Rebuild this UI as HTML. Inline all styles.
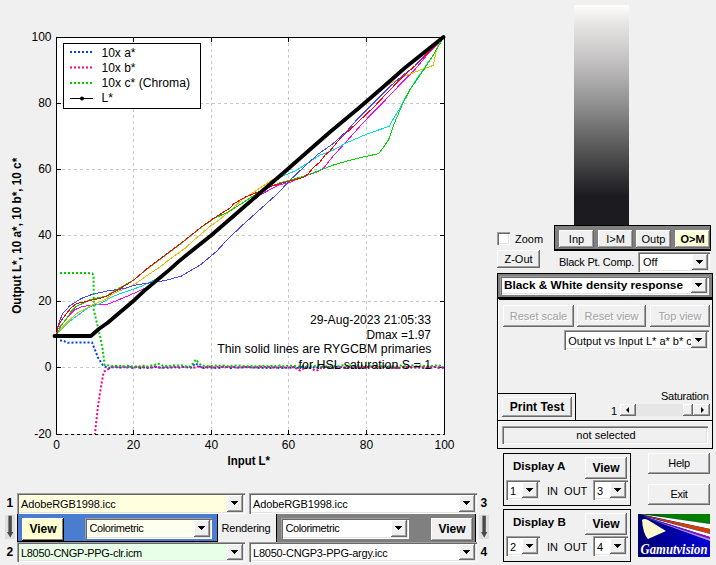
<!DOCTYPE html>
<html><head><meta charset="utf-8"><style>
*{box-sizing:border-box}
body{margin:0;width:716px;height:565px;background:#f0f0f0;position:relative;overflow:hidden;font-family:"Liberation Sans",sans-serif;font-size:11px;color:#000}
.a{position:absolute}
.btn{position:absolute;background:#f0f0f0;box-shadow:inset -1px -1px #696969,inset 1px 1px #fff,inset -2px -2px #a0a0a0;text-align:center;white-space:nowrap}
.cb{position:absolute;background:#fff;box-shadow:inset 1px 1px #a0a0a0,inset 2px 2px #696969,inset -1px -1px #fff,inset -2px -2px #e3e3e3;white-space:nowrap;overflow:hidden}
.dd{position:absolute;top:2px;right:2px;bottom:2px;width:16px;background:#f0f0f0;box-shadow:inset -1px -1px #696969,inset 1px 1px #fff,inset -2px -2px #a0a0a0}
.dd:after{content:"";position:absolute;left:4px;top:6px;border-left:4px solid transparent;border-right:4px solid transparent;border-top:4px solid #000}
.txt{position:absolute;white-space:nowrap;line-height:12px}
</style></head><body>
<svg width="716" height="480" style="position:absolute;left:0;top:0">
<rect x="56" y="37" width="389" height="398" fill="#fff"/>
<path d="M133.5,37 V434 M211.5,37 V434 M288.5,37 V434 M366.5,37 V434 M56,103.5 H444 M56,169.5 H444 M56,235.5 H444 M56,301.5 H444 M56,367.5 H444" stroke="#c8c8c8" stroke-width="1" stroke-dasharray="3 3" fill="none" shape-rendering="crispEdges"/>
<path d="M56.5,434 V37.5 H444.5 V434" stroke="#000" stroke-width="1" fill="none" shape-rendering="crispEdges"/>
<path d="M56,434.5 H445" stroke="#d8d8d8" stroke-width="1" fill="none" shape-rendering="crispEdges"/>
<path d="M56,434.5 H62" stroke="#000" stroke-width="1" fill="none" shape-rendering="crispEdges"/><path d="M65,434.5 H445" stroke="#000" stroke-width="1" stroke-dasharray="3 3" fill="none" shape-rendering="crispEdges"/>
<path d="M133.5,38 V42 M133.5,434 V430 M211.5,38 V42 M211.5,434 V430 M288.5,38 V42 M288.5,434 V430 M366.5,38 V42 M366.5,434 V430 M57,103.5 H61 M444,103.5 H440 M57,169.5 H61 M444,169.5 H440 M57,235.5 H61 M444,235.5 H440 M57,301.5 H61 M444,301.5 H440 M57,367.5 H61 M444,367.5 H440" stroke="#000" stroke-width="1" fill="none" shape-rendering="crispEdges"/>
<g fill="none" stroke-width="1" stroke-linejoin="round" shape-rendering="crispEdges">
<path d="M56.5,336.0 L57.8,329.2 L63.1,323.1 L69.3,315.1 L74.6,309.8 L80.8,307.1 L87.0,305.8 L94.0,304.9 L106.0,304.9 L110.6,303.2 L119.1,299.6 L127.6,296.1 L134.0,293.3 L144.2,288.5 L150.0,287.5 L165.4,273.6 L183.1,258.5 L200.8,244.0 L230.0,219.5 L242.7,209.0 L260.4,194.9 L278.1,185.1 L290.0,182.3 L304.2,176.0 L318.3,171.7 L325.0,166.5 L332.5,156.8 L346.7,141.2 L364.2,121.6 L382.0,103.5 L399.6,85.0 L414.8,69.7 L427.2,54.8 L443.5,37.5" stroke="#ff00ff"/>
<path d="M56.5,336.0 L58.7,331.9 L66.6,323.9 L75.5,316.9 L85.2,309.8 L91.4,306.2 L97.6,304.5 L106.0,300.5 L110.6,297.5 L119.1,294.0 L127.6,291.1 L134.0,289.0 L144.2,285.0 L160.0,277.0 L183.1,258.0 L200.8,242.8 L230.0,218.5 L260.4,192.5 L278.1,178.0 L290.0,173.1 L296.5,170.3 L308.0,162.8 L319.6,155.3 L332.5,150.5 L346.7,142.7 L366.5,134.2 L389.0,126.4 L394.8,116.6 L399.7,108.6 L402.8,102.4 L409.6,90.0 L417.0,78.5 L424.7,67.5 L433.4,54.8 L443.5,37.5" stroke="#00dede"/>
<path d="M56.5,336.0 L58.7,331.0 L64.8,324.8 L71.9,317.7 L78.1,312.4 L85.2,308.9 L91.4,305.4 L97.6,302.7 L106.0,299.2 L110.6,295.4 L119.1,291.1 L127.6,287.6 L134.0,284.8 L147.7,275.0 L160.0,267.0 L172.4,257.2 L184.8,248.5 L197.2,237.3 L209.5,226.8 L218.2,220.6 L227.0,213.4 L242.7,199.3 L260.4,187.8 L271.0,180.7 L285.0,172.0 L310.0,150.0 L330.0,132.5 L358.0,109.3 L382.0,88.5 L392.0,82.5 L402.4,77.1 L414.8,72.1 L424.7,68.4 L433.4,65.3 L434.0,62.2 L435.8,52.3 L437.7,46.1 L443.5,37.5" stroke="#e6c000"/>
<path d="M56.5,336.0 L57.3,329.2 L58.7,323.9 L62.2,314.2 L65.7,310.2 L70.2,305.4 L74.6,302.7 L81.7,298.3 L91.4,294.7 L106.0,291.2 L110.6,290.4 L117.7,289.7 L127.6,287.6 L134.0,285.3 L147.7,283.2 L165.4,280.5 L181.3,276.1 L200.8,264.6 L216.7,251.3 L226.8,240.0 L242.7,225.0 L260.4,209.0 L278.1,193.1 L290.0,180.2 L304.2,166.7 L318.3,154.0 L332.5,144.1 L346.7,131.3 L356.6,120.0 L373.1,103.5 L390.4,86.0 L402.4,75.8 L414.8,66.0 L427.2,52.3 L443.5,37.5" stroke="#4848ff"/>
<path d="M56.5,336.0 L60.4,326.6 L66.6,318.6 L71.0,311.5 L76.4,306.2 L82.5,303.6 L89.6,300.0 L95.8,298.3 L106.0,296.1 L110.6,293.3 L119.1,288.3 L127.6,283.4 L134.0,279.8 L147.7,268.5 L165.4,255.3 L183.1,242.0 L200.8,227.8 L213.2,219.0 L230.0,211.0 L242.7,202.8 L260.4,191.3 L278.1,183.4 L290.0,180.2 L304.2,176.0 L318.3,171.0 L332.5,165.3 L346.7,161.1 L360.8,157.5 L378.7,153.7 L382.4,148.8 L388.6,139.6 L394.8,122.2 L402.2,104.9 L409.8,90.0 L417.0,79.5 L424.7,68.4 L433.4,54.8 L443.5,37.5" stroke="#00d800"/>
<path d="M56.5,336.0 L57.8,327.5 L61.3,320.4 L66.6,313.3 L71.0,308.0 L76.4,303.6 L82.5,302.3 L87.0,301.4 L93.2,299.6 L98.5,298.7 L106.0,296.5 L110.6,294.0 L119.1,289.0 L127.6,284.1 L134.0,279.8 L147.7,268.1 L165.4,254.9 L183.1,241.6 L200.8,227.4 L213.2,218.6 L230.0,208.0 L233.8,203.7 L246.2,196.6 L253.3,194.0 L269.2,186.9 L287.0,181.6 L290.0,181.0 L303.6,177.4 L308.0,173.9 L314.2,166.8 L319.6,162.4 L324.9,155.3 L330.0,150.9 L339.6,139.1 L355.4,124.5 L373.1,107.8 L390.8,89.0 L402.4,77.1 L414.8,66.0 L427.2,53.5 L443.5,37.5" stroke="#ff0000"/>
</g>
<g fill="none" stroke-width="2" stroke-dasharray="2 2">
<path d="M60.0,340.5 L62.8,340.5 L67.7,342.8 L75.5,342.5 L92.0,342.5 L94.9,349.5 L97.8,357.2 L102.7,365.0 L108.5,368.5 L111.0,367.0 L114.0,367.5 L117.0,367.2 L120.0,367.5 L123.0,367.6 L126.0,366.8 L129.0,366.7 L132.0,367.9 L135.0,367.1 L138.0,367.0 L141.0,368.1 L144.0,367.4 L147.0,367.9 L150.0,367.4 L153.0,367.6 L156.0,366.9 L159.0,367.6 L162.0,367.9 L165.0,367.4 L168.0,367.7 L171.0,367.6 L174.0,366.8 L177.0,367.8 L180.0,367.5 L183.0,367.1 L186.0,366.7 L189.0,367.9 L192.0,367.4 L195.0,363.4 L198.0,364.7 L201.0,367.7 L204.0,368.0 L207.0,367.3 L210.0,367.8 L213.0,367.3 L216.0,368.0 L219.0,367.9 L222.0,366.8 L225.0,366.9 L228.0,367.0 L231.0,368.1 L234.0,367.3 L237.0,367.6 L240.0,367.1 L243.0,367.4 L246.0,367.2 L249.0,367.2 L252.0,367.5 L255.0,367.5 L258.0,368.0 L261.0,367.7 L264.0,368.0 L267.0,367.9 L270.0,368.1 L273.0,367.6 L276.0,366.9 L279.0,367.9 L282.0,368.1 L285.0,368.0 L288.0,367.5 L291.0,367.7 L294.0,367.0 L297.0,367.9 L300.0,367.5 L303.0,367.1 L306.0,366.8 L309.0,367.9 L312.0,368.1 L315.0,366.8 L318.0,367.8 L321.0,367.3 L324.0,366.9 L327.0,367.1 L330.0,367.8 L333.0,367.9 L336.0,366.8 L339.0,367.6 L342.0,366.8 L345.0,367.7 L348.0,367.2 L351.0,367.9 L354.0,368.1 L357.0,367.4 L360.0,368.1 L363.0,367.1 L366.0,366.8 L369.0,367.5 L372.0,366.7 L375.0,367.0 L378.0,367.3 L381.0,367.6 L384.0,366.9 L387.0,366.8 L390.0,367.9 L393.0,367.1 L396.0,368.0 L399.0,368.0 L402.0,367.2 L405.0,367.3 L408.0,367.4 L411.0,367.6 L414.0,367.5 L417.0,367.5 L420.0,367.6 L423.0,368.0 L426.0,367.4 L429.0,367.3 L432.0,367.7 L435.0,367.0 L438.0,367.1 L441.0,368.1 L444.0,367.4" stroke="#0040ff"/>
<path d="M94.9,434.0 L97.8,407.8 L100.7,388.4 L103.7,371.8 L108.5,368.9 L111.0,367.3 L114.0,366.5 L117.0,367.1 L120.0,367.3 L123.0,366.5 L126.0,367.4 L129.0,367.4 L132.0,366.6 L135.0,367.4 L138.0,367.2 L141.0,367.5 L144.0,367.0 L147.0,367.5 L150.0,367.5 L153.0,366.5 L156.0,366.6 L159.0,367.4 L162.0,367.8 L165.0,366.9 L168.0,367.1 L171.0,367.3 L174.0,366.9 L177.0,367.0 L180.0,366.9 L183.0,367.0 L186.0,367.3 L189.0,366.9 L192.0,367.0 L195.0,367.6 L198.0,366.5 L201.0,367.3 L204.0,367.5 L207.0,366.9 L210.0,366.8 L213.0,367.6 L216.0,366.8 L219.0,366.8 L222.0,367.1 L225.0,367.5 L228.0,366.6 L231.0,367.0 L234.0,367.0 L237.0,367.7 L240.0,367.1 L243.0,367.7 L246.0,366.7 L249.0,367.0 L252.0,367.4 L255.0,367.7 L258.0,367.1 L261.0,366.8 L264.0,366.7 L267.0,367.2 L270.0,366.8 L273.0,367.6 L276.0,367.7 L279.0,366.8 L282.0,366.9 L285.0,367.6 L288.0,367.4 L291.0,367.6 L294.0,367.0 L297.0,368.9 L300.0,370.5 L303.0,368.9 L306.0,366.9 L309.0,367.0 L312.0,368.6 L315.0,370.8 L318.0,370.1 L321.0,367.9 L324.0,366.7 L327.0,366.5 L330.0,367.8 L333.0,367.7 L336.0,367.9 L339.0,367.1 L342.0,367.8 L345.0,367.8 L348.0,366.8 L351.0,367.5 L354.0,367.7 L357.0,367.4 L360.0,367.2 L363.0,366.9 L366.0,367.0 L369.0,366.8 L372.0,366.6 L375.0,367.3 L378.0,366.9 L381.0,367.6 L384.0,366.6 L387.0,367.8 L390.0,367.5 L393.0,367.8 L396.0,367.8 L399.0,367.8 L402.0,367.3 L405.0,366.5 L408.0,367.5 L411.0,366.7 L414.0,366.9 L417.0,367.4 L420.0,367.2 L423.0,367.1 L426.0,367.8 L429.0,367.4 L432.0,367.0 L435.0,366.9 L438.0,367.7 L441.0,367.2 L444.0,367.6" stroke="#ff0080" stroke-dashoffset="1"/>
<path d="M60.0,273.0 L88.0,273.0 L92.2,273.5 L93.5,275.0 L93.8,310.0 L99.8,335.0 L102.7,349.5 L104.6,365.0 L112.4,366.0 L115.0,365.8 L118.0,365.6 L121.0,366.0 L124.0,366.4 L127.0,365.5 L130.0,366.4 L133.0,366.6 L136.0,366.4 L139.0,366.5 L142.0,365.3 L145.0,366.2 L148.0,366.5 L151.0,365.4 L154.0,365.4 L157.0,363.6 L160.0,364.2 L163.0,365.9 L166.0,366.0 L169.0,366.4 L172.0,365.3 L175.0,365.4 L178.0,365.5 L181.0,365.5 L184.0,365.4 L187.0,366.7 L190.0,366.5 L193.0,363.4 L196.0,359.5 L199.0,363.4 L202.0,365.7 L205.0,365.8 L208.0,366.2 L211.0,366.1 L214.0,365.8 L217.0,365.6 L220.0,365.8 L223.0,365.5 L226.0,366.1 L229.0,366.3 L232.0,365.8 L235.0,365.4 L238.0,365.5 L241.0,365.8 L244.0,366.1 L247.0,366.4 L250.0,365.8 L253.0,366.4 L256.0,366.2 L259.0,365.9 L262.0,365.8 L265.0,366.0 L268.0,366.3 L271.0,365.9 L274.0,366.3 L277.0,365.9 L280.0,365.6 L283.0,366.1 L286.0,366.3 L289.0,365.4 L292.0,365.9 L295.0,365.9 L298.0,366.5 L301.0,366.6 L304.0,365.8 L307.0,366.6 L310.0,366.4 L313.0,365.7 L316.0,365.9 L319.0,365.5 L322.0,366.4 L325.0,366.2 L328.0,366.5 L331.0,366.4 L334.0,366.2 L337.0,366.3 L340.0,366.1 L343.0,365.4 L346.0,366.1 L349.0,365.3 L352.0,365.5 L355.0,366.4 L358.0,365.4 L361.0,365.4 L364.0,365.4 L367.0,366.5 L370.0,365.6 L373.0,365.3 L376.0,366.5 L379.0,365.5 L382.0,366.5 L385.0,366.2 L388.0,366.5 L391.0,366.6 L394.0,366.1 L397.0,366.4 L400.0,365.4 L403.0,366.4 L406.0,366.0 L409.0,366.3 L412.0,365.4 L415.0,366.3 L418.0,366.6 L421.0,365.4 L424.0,365.8 L427.0,366.1 L430.0,366.5 L433.0,365.6 L436.0,365.6 L439.0,365.6 L442.0,366.2" stroke="#00cc00"/>
</g>
<path d="M54.5,336.0 L91.0,336.0 L98.8,329.0 L107.7,322.8 L116.5,315.2 L125.4,307.8 L134.2,300.2 L143.1,291.8 L151.9,284.4 L160.8,277.0 L169.6,269.6 L178.5,261.6 L190.0,252.2 L211.0,235.5 L235.0,214.7 L260.0,193.0 L285.0,171.5 L310.0,149.5 L330.0,132.0 L358.0,108.8 L382.0,88.0 L405.0,67.8 L426.0,51.0 L443.5,37.0" stroke="#000" stroke-width="3.8" fill="none" stroke-linejoin="round" stroke-linecap="round"/>
<rect x="63.5" y="43.5" width="137" height="65" fill="#fff" stroke="#000" stroke-width="1" shape-rendering="crispEdges"/>
<g fill="none" stroke-width="2" stroke-dasharray="2 2">
<path d="M70,52 H94" stroke="#0040ff"/>
<path d="M70,67.5 H94" stroke="#ff0080"/>
<path d="M70,83 H94" stroke="#00cc00"/>
</g>
<path d="M70,98.5 H93" stroke="#000" stroke-width="1"/><circle cx="82" cy="98.5" r="2" fill="#000"/>
<g font-family="Liberation Sans" font-size="12" fill="#000"><text x="101.5" y="57">10x a*</text><text x="101.5" y="72">10x b*</text><text x="101.5" y="87" textLength="88.5" lengthAdjust="spacingAndGlyphs">10x c* (Chroma)</text><text x="101.5" y="102.2">L*</text></g>
<g font-family="Liberation Sans" font-size="12" fill="#000"><text x="51.5" y="40.5" text-anchor="end">100</text><text x="51.5" y="106.5" text-anchor="end">80</text><text x="51.5" y="172.5" text-anchor="end">60</text><text x="51.5" y="238.5" text-anchor="end">40</text><text x="51.5" y="304.5" text-anchor="end">20</text><text x="51.5" y="370.5" text-anchor="end">0</text><text x="51.5" y="437.5" text-anchor="end">-20</text><text x="56.5" y="449" text-anchor="middle">0</text><text x="133.5" y="449" text-anchor="middle">20</text><text x="211.5" y="449" text-anchor="middle">40</text><text x="288.5" y="449" text-anchor="middle">60</text><text x="366.5" y="449" text-anchor="middle">80</text><text x="444.5" y="449" text-anchor="middle">100</text></g>
<text x="248.8" y="465" text-anchor="middle" textLength="42.5" lengthAdjust="spacingAndGlyphs" font-family="Liberation Sans" font-size="12" font-weight="bold">Input L*</text>
<text transform="translate(21,235.8) rotate(-90)" text-anchor="middle" textLength="156" lengthAdjust="spacingAndGlyphs" font-family="Liberation Sans" font-size="12" font-weight="bold">Output L*, 10 a*, 10 b*, 10 c*</text>
<g font-family="Liberation Sans" font-size="12" fill="#000" text-anchor="start"><text x="310" y="324" textLength="121" lengthAdjust="spacingAndGlyphs">29-Aug-2023 21:05:33</text><text x="366.5" y="338.7" textLength="64.5" lengthAdjust="spacingAndGlyphs">Dmax =1.97</text><text x="217.2" y="353.4" textLength="214.3" lengthAdjust="spacingAndGlyphs" >Thin solid lines are RYGCBM primaries</text><text x="298.6" y="368.7" textLength="132.6" lengthAdjust="spacingAndGlyphs">for HSL saturation S = 1</text></g>
</svg>
<div class="a" style="left:574px;top:5px;width:55px;height:220px;background:linear-gradient(#fffcfc 0%,#e8e5e5 8%,#cfcdcd 20%,#b0afaf 33%,#8e8d8d 46%,#6c6b6c 58%,#4a4a4b 70%,#2e2e31 80%,#1c1c20 87%,#1c1c20 100%)"></div>
<div class="a" style="left:497px;top:232px;width:13px;height:13px;background:#fff;box-shadow:inset 1px 1px #a0a0a0,inset 2px 2px #696969,inset -1px -1px #fff,inset -2px -2px #e3e3e3"></div>
<div class="txt" style="left:515px;top:233.69px;font-size:11px;line-height:11px;color:#000;">Zoom</div>
<div class="a" style="left:554px;top:225px;width:157px;height:26px;background:#808080;border:1px solid #000;border-bottom-width:2px"></div>
<div class="a" style="left:559px;top:230px;width:35px;height:18px;background:#f0f0f0;box-shadow:inset -1px -1px #696969,inset 1px 1px #fff,inset -2px -2px #a0a0a0"></div><div class="txt" style="left:426.5px;width:300px;text-align:center;top:233.69px;font-size:11px;line-height:11px;color:#000;">Inp</div>
<div class="a" style="left:598px;top:230px;width:35px;height:18px;background:#f0f0f0;box-shadow:inset -1px -1px #696969,inset 1px 1px #fff,inset -2px -2px #a0a0a0"></div><div class="txt" style="left:465.5px;width:300px;text-align:center;top:233.69px;font-size:11px;line-height:11px;color:#000;">I&gt;M</div>
<div class="a" style="left:636px;top:230px;width:35px;height:18px;background:#f0f0f0;box-shadow:inset -1px -1px #696969,inset 1px 1px #fff,inset -2px -2px #a0a0a0"></div><div class="txt" style="left:503.5px;width:300px;text-align:center;top:233.69px;font-size:11px;line-height:11px;color:#000;">Outp</div>
<div class="a" style="left:675px;top:230px;width:35px;height:18px;background:#ffffd8;box-shadow:inset -1px -1px #696969,inset 1px 1px #fff,inset -2px -2px #a0a0a0"></div><div class="txt" style="left:542.5px;width:300px;text-align:center;top:233.69px;font-size:11px;line-height:11px;font-weight:bold;color:#000;">O&gt;M</div>
<div class="a" style="left:497px;top:250px;width:43px;height:18px;background:#f0f0f0;box-shadow:inset -1px -1px #696969,inset 1px 1px #fff,inset -2px -2px #a0a0a0"></div><div class="txt" style="left:368.5px;width:300px;text-align:center;top:253.69px;font-size:11px;line-height:11px;color:#000;">Z-Out</div>
<div class="txt" style="left:559px;top:257.19px;font-size:11px;line-height:11px;color:#000;letter-spacing:-0.26px">Black Pt. Comp.</div>
<div class="a" style="left:638px;top:252px;width:72px;height:20px;background:#fff;box-shadow:inset 1px 1px #a0a0a0,inset 2px 2px #696969,inset -1px -1px #fff,inset -2px -2px #e3e3e3"></div><div class="a" style="left:692px;top:254px;width:16px;height:16px;background:#f0f0f0;box-shadow:inset -1px -1px #696969,inset 1px 1px #fff,inset -2px -2px #a0a0a0"></div><svg class="a" style="left:696px;top:260px" width="7" height="4"><path d="M0,0H7V1H6V2H5V3H4V4H3V3H2V2H1V1H0Z" fill="#000"/></svg><div class="txt" style="left:643px;top:256.99px;width:49px;overflow:hidden;font-size:11px;line-height:11px;">Off</div>
<div class="a" style="left:497px;top:273px;width:216px;height:27px;background:#808080;border:1px solid #000;border-bottom-width:3px"></div>
<div class="a" style="left:500px;top:276px;width:209px;height:19px;background:#fff;box-shadow:inset 1px 1px #a0a0a0,inset 2px 2px #696969,inset -1px -1px #fff,inset -2px -2px #e3e3e3"></div><div class="a" style="left:691px;top:278px;width:16px;height:15px;background:#f0f0f0;box-shadow:inset -1px -1px #696969,inset 1px 1px #fff,inset -2px -2px #a0a0a0"></div><svg class="a" style="left:695px;top:283px" width="7" height="4"><path d="M0,0H7V1H6V2H5V3H4V4H3V3H2V2H1V1H0Z" fill="#000"/></svg><div class="txt" style="left:504px;top:279.51px;width:187px;overflow:hidden;font-size:11.8px;line-height:11.8px;font-weight:bold;">Black &amp; White density response</div>
<div class="a" style="left:497px;top:299px;width:216px;height:150px;border:1px solid #000;border-top:none;box-shadow:inset 1px 0 #fff"></div>
<div class="a" style="left:503px;top:305px;width:71px;height:22px;background:#f0f0f0;box-shadow:inset -1px -1px #696969,inset 1px 1px #fff,inset -2px -2px #a0a0a0"></div><div class="txt" style="left:388.5px;width:300px;text-align:center;top:310.69px;font-size:11px;line-height:11px;color:#a0a0a0;text-shadow:1px 1px #fff">Reset scale</div>
<div class="a" style="left:577px;top:305px;width:69px;height:22px;background:#f0f0f0;box-shadow:inset -1px -1px #696969,inset 1px 1px #fff,inset -2px -2px #a0a0a0"></div><div class="txt" style="left:461.5px;width:300px;text-align:center;top:310.69px;font-size:11px;line-height:11px;color:#a0a0a0;text-shadow:1px 1px #fff">Reset view</div>
<div class="a" style="left:650px;top:305px;width:60px;height:22px;background:#f0f0f0;box-shadow:inset -1px -1px #696969,inset 1px 1px #fff,inset -2px -2px #a0a0a0"></div><div class="txt" style="left:530.0px;width:300px;text-align:center;top:310.69px;font-size:11px;line-height:11px;color:#a0a0a0;text-shadow:1px 1px #fff">Top view</div>
<div class="a" style="left:564px;top:330px;width:145px;height:20px;background:#fff;box-shadow:inset 1px 1px #a0a0a0,inset 2px 2px #696969,inset -1px -1px #fff,inset -2px -2px #e3e3e3"></div><div class="a" style="left:691px;top:332px;width:16px;height:16px;background:#f0f0f0;box-shadow:inset -1px -1px #696969,inset 1px 1px #fff,inset -2px -2px #a0a0a0"></div><svg class="a" style="left:695px;top:338px" width="7" height="4"><path d="M0,0H7V1H6V2H5V3H4V4H3V3H2V2H1V1H0Z" fill="#000"/></svg><div class="txt" style="left:568.3px;top:335.89px;width:122.70000000000005px;overflow:hidden;font-size:11px;line-height:11px;">Output vs Input L* a* b* c*</div>
<div class="a" style="left:497px;top:393px;width:79px;height:28px;border-top:1px solid #000;border-right:1px solid #000"></div>
<div class="a" style="left:502px;top:397px;width:70px;height:20px;background:#f0f0f0;box-shadow:inset -1px -1px #696969,inset 1px 1px #fff,inset -2px -2px #a0a0a0"></div><div class="txt" style="left:387.0px;width:300px;text-align:center;top:401.34px;font-size:12px;line-height:12px;font-weight:bold;color:#000;">Print Test</div>
<div class="txt" style="right:7.5px;top:390.69px;font-size:11px;line-height:11px;color:#000;letter-spacing:-0.27px">Saturation</div>
<div class="txt" style="left:611px;top:405.69px;font-size:11px;line-height:11px;color:#000;">1</div>
<div class="a" style="left:620px;top:404px;width:90px;height:12px;background:#e6e6e6"></div>
<div class="a" style="left:620px;top:404px;width:16px;height:12px;background:#f0f0f0;box-shadow:inset -1px -1px #696969,inset 1px 1px #fff,inset -2px -2px #a0a0a0"></div>
<div class="a" style="left:683px;top:404px;width:10px;height:12px;background:#f0f0f0;box-shadow:inset -1px -1px #696969,inset 1px 1px #fff,inset -2px -2px #a0a0a0"></div>
<div class="a" style="left:693px;top:404px;width:17px;height:12px;background:#f0f0f0;box-shadow:inset -1px -1px #696969,inset 1px 1px #fff,inset -2px -2px #a0a0a0"></div>
<div class="a" style="left:626px;top:407px;width:0;height:0;border-top:3px solid transparent;border-bottom:3px solid transparent;border-right:3px solid #000"></div>
<div class="a" style="left:701px;top:407px;width:0;height:0;border-top:3px solid transparent;border-bottom:3px solid transparent;border-left:3px solid #000"></div>
<div class="a" style="left:498px;top:420px;width:214px;height:1px;background:#000"></div>
<div class="a" style="left:498px;top:421px;width:214px;height:1px;background:#fff"></div>
<div class="a" style="left:502px;top:426px;width:206px;height:18px;background:#f0f0f0;box-shadow:inset 1px 1px #a0a0a0,inset 2px 2px #696969,inset -1px -1px #fff,inset -2px -2px #e3e3e3"></div>
<div class="txt" style="left:456px;width:300px;text-align:center;top:429.69px;font-size:11px;line-height:11px;color:#000;">not selected</div>
<div class="a" style="left:503px;top:453px;width:128px;height:53px;border:1px solid #000"></div>
<div class="txt" style="left:513px;top:460.18px;font-size:11.6px;line-height:11.6px;font-weight:bold;color:#000;">Display A</div>
<div class="a" style="left:585px;top:457px;width:42px;height:22px;background:#f0f0f0;box-shadow:inset -1px -1px #696969,inset 1px 1px #fff,inset -2px -2px #a0a0a0"></div><div class="txt" style="left:456.0px;width:300px;text-align:center;top:462.34px;font-size:12px;line-height:12px;font-weight:bold;color:#000;">View</div>
<div class="a" style="left:506px;top:480px;width:34px;height:20px;background:#fff;box-shadow:inset 1px 1px #a0a0a0,inset 2px 2px #696969,inset -1px -1px #fff,inset -2px -2px #e3e3e3"></div><div class="a" style="left:522px;top:482px;width:16px;height:16px;background:#f0f0f0;box-shadow:inset -1px -1px #696969,inset 1px 1px #fff,inset -2px -2px #a0a0a0"></div><svg class="a" style="left:526px;top:488px" width="7" height="4"><path d="M0,0H7V1H6V2H5V3H4V4H3V3H2V2H1V1H0Z" fill="#000"/></svg><div class="txt" style="left:510px;top:485.69px;width:12px;overflow:hidden;font-size:11px;line-height:11px;">1</div>
<div class="txt" style="left:547px;top:485.69px;font-size:11px;line-height:11px;color:#000;">IN&nbsp; OUT</div>
<div class="a" style="left:593px;top:480px;width:35px;height:20px;background:#fff;box-shadow:inset 1px 1px #a0a0a0,inset 2px 2px #696969,inset -1px -1px #fff,inset -2px -2px #e3e3e3"></div><div class="a" style="left:610px;top:482px;width:16px;height:16px;background:#f0f0f0;box-shadow:inset -1px -1px #696969,inset 1px 1px #fff,inset -2px -2px #a0a0a0"></div><svg class="a" style="left:614px;top:488px" width="7" height="4"><path d="M0,0H7V1H6V2H5V3H4V4H3V3H2V2H1V1H0Z" fill="#000"/></svg><div class="txt" style="left:597px;top:485.69px;width:13px;overflow:hidden;font-size:11px;line-height:11px;">3</div>
<div class="a" style="left:503px;top:509px;width:128px;height:53px;border:1px solid #000"></div>
<div class="txt" style="left:513px;top:516.18px;font-size:11.6px;line-height:11.6px;font-weight:bold;color:#000;">Display B</div>
<div class="a" style="left:585px;top:513px;width:42px;height:22px;background:#f0f0f0;box-shadow:inset -1px -1px #696969,inset 1px 1px #fff,inset -2px -2px #a0a0a0"></div><div class="txt" style="left:456.0px;width:300px;text-align:center;top:518.34px;font-size:12px;line-height:12px;font-weight:bold;color:#000;">View</div>
<div class="a" style="left:506px;top:536px;width:34px;height:20px;background:#fff;box-shadow:inset 1px 1px #a0a0a0,inset 2px 2px #696969,inset -1px -1px #fff,inset -2px -2px #e3e3e3"></div><div class="a" style="left:522px;top:538px;width:16px;height:16px;background:#f0f0f0;box-shadow:inset -1px -1px #696969,inset 1px 1px #fff,inset -2px -2px #a0a0a0"></div><svg class="a" style="left:526px;top:544px" width="7" height="4"><path d="M0,0H7V1H6V2H5V3H4V4H3V3H2V2H1V1H0Z" fill="#000"/></svg><div class="txt" style="left:510px;top:541.69px;width:12px;overflow:hidden;font-size:11px;line-height:11px;">2</div>
<div class="txt" style="left:547px;top:541.69px;font-size:11px;line-height:11px;color:#000;">IN&nbsp; OUT</div>
<div class="a" style="left:593px;top:536px;width:35px;height:20px;background:#fff;box-shadow:inset 1px 1px #a0a0a0,inset 2px 2px #696969,inset -1px -1px #fff,inset -2px -2px #e3e3e3"></div><div class="a" style="left:610px;top:538px;width:16px;height:16px;background:#f0f0f0;box-shadow:inset -1px -1px #696969,inset 1px 1px #fff,inset -2px -2px #a0a0a0"></div><svg class="a" style="left:614px;top:544px" width="7" height="4"><path d="M0,0H7V1H6V2H5V3H4V4H3V3H2V2H1V1H0Z" fill="#000"/></svg><div class="txt" style="left:597px;top:541.69px;width:13px;overflow:hidden;font-size:11px;line-height:11px;">4</div>
<div class="a" style="left:648px;top:453px;width:62px;height:21px;background:#f0f0f0;box-shadow:inset -1px -1px #696969,inset 1px 1px #fff,inset -2px -2px #a0a0a0"></div><div class="txt" style="left:529.0px;width:300px;text-align:center;top:458.19px;font-size:11px;line-height:11px;color:#000;letter-spacing:-0.3px">Help</div>
<div class="a" style="left:648px;top:484px;width:62px;height:21px;background:#f0f0f0;box-shadow:inset -1px -1px #696969,inset 1px 1px #fff,inset -2px -2px #a0a0a0"></div><div class="txt" style="left:529.0px;width:300px;text-align:center;top:488.69px;font-size:11px;line-height:11px;color:#000;letter-spacing:-0.3px">Exit</div>
<svg class="a" style="left:638px;top:514px" width="72" height="43" viewBox="0 0 72 43">
<defs><linearGradient id="lg" x1="0" x2="1" y1="0" y2="0"><stop offset="0" stop-color="#000070"/><stop offset="1" stop-color="#0000d8"/></linearGradient>
<linearGradient id="gg" x1="0" x2="1"><stop offset="0" stop-color="#003000"/><stop offset="0.4" stop-color="#007a00"/><stop offset="1" stop-color="#008000"/></linearGradient></defs>
<rect width="72" height="43" fill="url(#lg)"/>
<path d="M0,0 L72,0 L72,10 Z" fill="url(#gg)"/>
<path d="M2,0 L72,10 L72,15 Z" fill="#fff"/>
<path d="M4,1 L72,15 L72,20 Z" fill="#d04000"/>
<path d="M5,2 L72,20 L72,23 Z" fill="#fff"/>
<path d="M6,2.5 L72,23 L72,25 Z" fill="#a000c0"/>
<path d="M6,3 L72,25 L72,27 Z" fill="#e0e0ff" opacity="0.7"/>
<path d="M4,6 Q6,4 10,6 L28,17 L10,25 Q5,20 4,6 Z" fill="#fffacd"/>
<text x="36" y="40" text-anchor="middle" font-family="Liberation Serif" font-style="italic" font-weight="bold" font-size="14" fill="#fff" textLength="67" lengthAdjust="spacingAndGlyphs">Gamutvision</text>
</svg>
<div class="txt" style="left:6.5px;top:496.84px;font-size:12px;line-height:12px;font-weight:bold;color:#000;">1</div>
<div class="txt" style="left:6.5px;top:545.84px;font-size:12px;line-height:12px;font-weight:bold;color:#000;">2</div>
<div class="txt" style="left:480.5px;top:496.84px;font-size:12px;line-height:12px;font-weight:bold;color:#000;">3</div>
<div class="txt" style="left:480.5px;top:545.84px;font-size:12px;line-height:12px;font-weight:bold;color:#000;">4</div>
<div class="a" style="left:17px;top:493px;width:228px;height:21px;background:#ffffe0;box-shadow:inset 1px 1px #a0a0a0,inset 2px 2px #696969,inset -1px -1px #fff,inset -2px -2px #e3e3e3"></div><div class="a" style="left:227px;top:495px;width:16px;height:17px;background:#f0f0f0;box-shadow:inset -1px -1px #696969,inset 1px 1px #fff,inset -2px -2px #a0a0a0"></div><svg class="a" style="left:231px;top:501px" width="7" height="4"><path d="M0,0H7V1H6V2H5V3H4V4H3V3H2V2H1V1H0Z" fill="#000"/></svg><div class="txt" style="left:21px;top:498.69px;width:206px;overflow:hidden;font-size:11px;line-height:11px;letter-spacing:-0.12px">AdobeRGB1998.icc</div>
<div class="a" style="left:249px;top:493px;width:228px;height:21px;background:#fff;box-shadow:inset 1px 1px #a0a0a0,inset 2px 2px #696969,inset -1px -1px #fff,inset -2px -2px #e3e3e3"></div><div class="a" style="left:459px;top:495px;width:16px;height:17px;background:#f0f0f0;box-shadow:inset -1px -1px #696969,inset 1px 1px #fff,inset -2px -2px #a0a0a0"></div><svg class="a" style="left:463px;top:501px" width="7" height="4"><path d="M0,0H7V1H6V2H5V3H4V4H3V3H2V2H1V1H0Z" fill="#000"/></svg><div class="txt" style="left:253px;top:498.69px;width:206px;overflow:hidden;font-size:11px;line-height:11px;letter-spacing:-0.12px">AdobeRGB1998.icc</div>
<div class="a" style="left:17px;top:542px;width:228px;height:20px;background:#e8ffe8;box-shadow:inset 1px 1px #a0a0a0,inset 2px 2px #696969,inset -1px -1px #fff,inset -2px -2px #e3e3e3"></div><div class="a" style="left:227px;top:544px;width:16px;height:16px;background:#f0f0f0;box-shadow:inset -1px -1px #696969,inset 1px 1px #fff,inset -2px -2px #a0a0a0"></div><svg class="a" style="left:231px;top:550px" width="7" height="4"><path d="M0,0H7V1H6V2H5V3H4V4H3V3H2V2H1V1H0Z" fill="#000"/></svg><div class="txt" style="left:21px;top:547.99px;width:206px;overflow:hidden;font-size:11px;line-height:11px;letter-spacing:-0.31px">L8050-CNGP-PPG-clr.icm</div>
<div class="a" style="left:249px;top:542px;width:228px;height:20px;background:#fff;box-shadow:inset 1px 1px #a0a0a0,inset 2px 2px #696969,inset -1px -1px #fff,inset -2px -2px #e3e3e3"></div><div class="a" style="left:459px;top:544px;width:16px;height:16px;background:#f0f0f0;box-shadow:inset -1px -1px #696969,inset 1px 1px #fff,inset -2px -2px #a0a0a0"></div><svg class="a" style="left:463px;top:550px" width="7" height="4"><path d="M0,0H7V1H6V2H5V3H4V4H3V3H2V2H1V1H0Z" fill="#000"/></svg><div class="txt" style="left:253px;top:547.99px;width:206px;overflow:hidden;font-size:11px;line-height:11px;letter-spacing:-0.22px">L8050-CNGP3-PPG-argy.icc</div>
<div class="a" style="left:17px;top:514px;width:201px;height:28px;background:#4a7dcf;border-left:1px solid #000;border-right:1px solid #000;border-bottom:1px solid #000"></div>
<div class="a" style="left:22px;top:518px;width:42px;height:23px;background:#ffffd0;box-shadow:inset -1px -1px #696969,inset 1px 1px #fff,inset -2px -2px #a0a0a0;box-shadow:inset -1px -1px #000,inset 1px 1px #fff,inset -2px -2px #808080"></div><div class="txt" style="left:-107.0px;width:300px;text-align:center;top:522.84px;font-size:12px;line-height:12px;font-weight:bold;color:#000;">View</div>
<div class="a" style="left:85px;top:518px;width:127px;height:21px;background:#fffff0;box-shadow:inset 1px 1px #a0a0a0,inset 2px 2px #696969,inset -1px -1px #fff,inset -2px -2px #e3e3e3"></div><div class="a" style="left:194px;top:520px;width:16px;height:17px;background:#f0f0f0;box-shadow:inset -1px -1px #696969,inset 1px 1px #fff,inset -2px -2px #a0a0a0"></div><svg class="a" style="left:198px;top:526px" width="7" height="4"><path d="M0,0H7V1H6V2H5V3H4V4H3V3H2V2H1V1H0Z" fill="#000"/></svg><div class="txt" style="left:89.5px;top:523.39px;width:104.5px;overflow:hidden;font-size:11px;line-height:11px;letter-spacing:-0.4px">Colorimetric</div>
<div class="txt" style="left:221.5px;top:523.19px;font-size:11px;line-height:11px;color:#000;letter-spacing:-0.2px">Rendering</div>
<div class="a" style="left:276px;top:514px;width:200px;height:28px;background:#808080;border-left:1px solid #000;border-right:1px solid #000"></div>
<div class="a" style="left:281px;top:518px;width:128px;height:21px;background:#fff;box-shadow:inset 1px 1px #a0a0a0,inset 2px 2px #696969,inset -1px -1px #fff,inset -2px -2px #e3e3e3"></div><div class="a" style="left:391px;top:520px;width:16px;height:17px;background:#f0f0f0;box-shadow:inset -1px -1px #696969,inset 1px 1px #fff,inset -2px -2px #a0a0a0"></div><svg class="a" style="left:395px;top:526px" width="7" height="4"><path d="M0,0H7V1H6V2H5V3H4V4H3V3H2V2H1V1H0Z" fill="#000"/></svg><div class="txt" style="left:285.5px;top:523.39px;width:105.5px;overflow:hidden;font-size:11px;line-height:11px;letter-spacing:-0.4px">Colorimetric</div>
<div class="a" style="left:431px;top:518px;width:42px;height:23px;background:#f0f0f0;box-shadow:inset -1px -1px #696969,inset 1px 1px #fff,inset -2px -2px #a0a0a0"></div><div class="txt" style="left:302.0px;width:300px;text-align:center;top:522.84px;font-size:12px;line-height:12px;font-weight:bold;color:#000;">View</div>
<svg class="a" style="left:5px;top:514.6px" width="10" height="24.2"><rect width="10" height="24.2" fill="#dedede"/><rect x="3.4" y="0.7" width="3.4" height="17" fill="#484848"/><path d="M2,17 L8.3,17 L5.2,22.5 Z" fill="#484848"/></svg>
<svg class="a" style="left:479px;top:514.6px" width="10" height="24.2"><rect width="10" height="24.2" fill="#dedede"/><rect x="3.4" y="0.7" width="3.4" height="17" fill="#484848"/><path d="M2,17 L8.3,17 L5.2,22.5 Z" fill="#484848"/></svg>
</body></html>
